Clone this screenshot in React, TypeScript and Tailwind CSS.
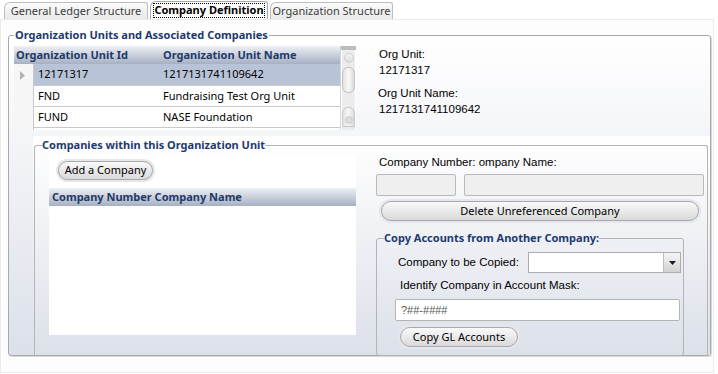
const tahoma = "font-['Noto_Sans',sans-serif]";
const arial = "font-['Liberation_Sans',Arial,sans-serif]";

const orgUnits = [
  { id: '12171317', name: '1217131741109642', selected: true },
  { id: 'FND', name: 'Fundraising Test Org Unit', selected: false },
  { id: 'FUND', name: 'NASE Foundation', selected: false },
];

function PillButton({ label, className }: { label: string; className: string }) {
  return (
    <div className={`rounded-full p-[2px] bg-[#e6e7ea] ${className}`}>
      <div
        className={`h-full w-full rounded-full border border-[#a9a9a9] bg-gradient-to-b from-[#fafafa] to-[#d9d9d9] flex items-center justify-center text-[11px] text-black ${tahoma}`}
      >
        {label}
      </div>
    </div>
  );
}

function Tab({ label, active, className }: { label: string; active?: boolean; className: string }) {
  if (active) {
    return (
      <div className={`h-[18px] rounded-tl-[6px] rounded-tr-[3px] border border-b-0 border-[#a9a9a9] bg-white px-[2px] pt-[1px] ${className}`}>
        <div className={`h-[15px] border border-dotted border-black flex items-center justify-center text-[11px] font-bold text-black ${tahoma}`}>
          {label}
        </div>
      </div>
    );
  }
  return (
    <div
      className={`h-[17px] rounded-tl-[6px] rounded-tr-[3px] border border-b-0 border-[#bdbdbd] bg-gradient-to-b from-[#fbfbfb] to-[#e9e9e9] flex items-center justify-center text-[11px] text-[#3c3c3c] ${tahoma} ${className}`}
    >
      {label}
    </div>
  );
}

function Scrollbar() {
  return (
    <div className="w-[16px] h-full flex flex-col bg-[#ececec] border-l border-[#d4d4d4]">
      <div className="h-[4px] bg-[#bdbdbd]" />
      <div className="flex-1 flex flex-col items-center border-x border-white">
        <div className="mt-[3px] w-[10px] h-[10px] rounded-full bg-gradient-to-b from-[#f4f4f4] to-[#dcdcdc] border border-[#d0d0d0]" />
        <div className="mt-[4px] w-[13px] h-[26px] rounded-[6px] bg-gradient-to-r from-[#e2e2e2] via-[#f8f8f8] to-[#dadada] border border-[#c2c2c2]" />
        <div className="flex-1" />
        <div className="mb-[3px] w-[13px] h-[20px] rounded-t-[6px] bg-gradient-to-r from-[#e2e2e2] via-[#f8f8f8] to-[#dadada] border border-[#c8c8c8] flex items-end justify-center pb-[2px]">
          <div className="w-[8px] h-[8px] rounded-full bg-[#dcdcdc] border border-[#cfcfcf]" />
        </div>
      </div>
    </div>
  );
}

function OrgUnitGrid() {
  return (
    <div className="flex w-[342px] h-[84px] bg-white">
      <div className="w-[326px] flex flex-col overflow-hidden">
        <div className={`h-[18px] shrink-0 flex items-center bg-gradient-to-b from-[#eef0f4] to-[#a6b0c3] text-[11px] font-bold text-[#1f3a68] ${tahoma}`}>
          <div className="w-[149px] pl-[2px]">Organization Unit Id</div>
          <div>Organization Unit Name</div>
        </div>
        {orgUnits.map((unit, index) => (
          <div key={unit.id} className={`${index === 0 ? 'h-[22px]' : 'h-[21px]'} shrink-0 flex`}>
            <div className="w-[19px] bg-[#f6f6f6] flex items-center pl-[6px]">
              {unit.selected && (
                <svg width="5" height="9" viewBox="0 0 5 9">
                  <path d="M0 0 L5 4.5 L0 9 Z" fill="#b3b3b3" />
                </svg>
              )}
            </div>
            <div
              className={`flex-1 flex items-center border-l border-b border-[#c9c9c9] text-[11px] text-black ${tahoma} ${unit.selected ? 'bg-[#b9c3d7]' : 'bg-white'}`}
            >
              <div className="w-[129px] pl-[4px]">{unit.id}</div>
              <div>{unit.name}</div>
            </div>
          </div>
        ))}
        <div className="flex-1 flex">
          <div className="w-[19px] bg-[#f6f6f6]" />
          <div className="flex-1 border-l border-[#c9c9c9]" />
        </div>
      </div>
      <Scrollbar />
    </div>
  );
}

export default function App() {
  return (
    <div className={`w-[718px] h-[374px] bg-white overflow-hidden ${arial}`}>
      <div className="h-[19px] flex items-end pl-[4px] gap-[2px]">
        <Tab label="General Ledger Structure" className="w-[144px]" />
        <Tab label="Company Definition" active className="w-[118px]" />
        <Tab label="Organization Structure" className="w-[123px]" />
      </div>

      <div className="w-[714px] h-[354px] border border-[#ececec] bg-[#fdfdfd] pt-[8px] pl-[7px]">
        <fieldset className="w-[703px] rounded-[3px] border border-[#a9a9a9] pl-[5px] bg-gradient-to-b from-white to-[#dce0e9] shadow-[1px_1px_0_#d8d8d8]">
          <legend className={`px-[1px] leading-[14px] text-[11px] font-bold text-[#1d3a6f] ${tahoma}`}>
            Organization Units and Associated Companies
          </legend>

          <div className="mt-[4px] flex">
            <OrgUnitGrid />
            <div className="ml-[23px] text-[11.5px] leading-[16px] text-black">
              <div>Org Unit:</div>
              <div>12171317</div>
              <div className="mt-[7px] -ml-[1px]">Org Unit Name:</div>
              <div>1217131741109642</div>
            </div>
          </div>

          <div className="mt-[6px] ml-[19px] w-[677px] h-[219px] pt-[2px] pl-[1px] bg-gradient-to-b from-white to-[#dce0e9]">
            <fieldset className="w-[674px] h-[217px] rounded-t-[3px] border border-b-0 border-[#b4b4b4] pl-[7px]">
              <legend className={`leading-[14px] text-[11px] font-bold text-[#1d3a6f] ${tahoma}`}>
                Companies within this Organization Unit
              </legend>

              <div className="mt-[3px] flex">
                <div className="ml-[7px] w-[307px] h-[180px] bg-white flex flex-col">
                  <PillButton label="Add a Company" className="ml-[7px] mt-[4px] w-[99px] h-[23px]" />
                  <div className={`mt-[6px] h-[18px] flex items-center pl-[3px] bg-gradient-to-b from-[#eef0f4] to-[#a6b0c3] text-[11px] font-bold text-[#1f3a68] ${tahoma}`}>
                    Company Number Company Name
                  </div>
                </div>

                <div className="ml-[20px] w-[328px] flex flex-col">
                  <div className="leading-[14px] text-[11.5px] pl-[3px] text-black">Company Number: ompany Name:</div>
                  <div className="mt-[5px] flex gap-[8px]">
                    <div className="w-[80px] h-[22px] rounded-[2px] border border-[#b9b9b9] bg-[#efefef]" />
                    <div className="w-[240px] h-[22px] rounded-[2px] border border-[#b9b9b9] bg-[#efefef]" />
                  </div>
                  <PillButton label="Delete Unreferenced Company" className="mt-[3px] ml-[3px] w-[322px] h-[24px]" />

                  <fieldset className="mt-[8px] w-[308px] h-[125px] rounded-[3px] border border-[#b4b4b4] pl-[7px]">
                    <legend className={`leading-[14px] text-[11px] font-bold text-[#1d3a6f] ${tahoma}`}>
                      Copy Accounts from Another Company:
                    </legend>
                    <div className="mt-[7px] flex items-center">
                      <div className="ml-[14px] w-[130px] text-[11.5px] text-black">Company to be Copied:</div>
                      <div className="w-[153px] h-[21px] flex border border-[#acacac] bg-white">
                        <div className="flex-1" />
                        <div className="w-[17px] h-full bg-gradient-to-b from-[#f6f6f6] to-[#d2d2d2] border-l border-[#bcbcbc] flex items-center justify-center">
                          <svg width="7" height="4" viewBox="0 0 7 4">
                            <path d="M0 0 H7 L3.5 4 Z" fill="#1a1a2a" />
                          </svg>
                        </div>
                      </div>
                    </div>
                    <div className="mt-[5px] ml-[16px] leading-[14px] text-[11.5px] text-black">Identify Company in Account Mask:</div>
                    <div className="mt-[7px] ml-[11px] w-[285px] h-[22px] rounded-[2px] border border-[#b4b4b4] bg-white flex items-center pl-[5px] text-[11px] text-[#555]">
                      ?##-####
                    </div>
                    <PillButton label="Copy GL Accounts" className="mt-[4px] ml-[14px] w-[122px] h-[24px]" />
                  </fieldset>
                </div>
              </div>
            </fieldset>
          </div>
        </fieldset>
      </div>
    </div>
  );
}
